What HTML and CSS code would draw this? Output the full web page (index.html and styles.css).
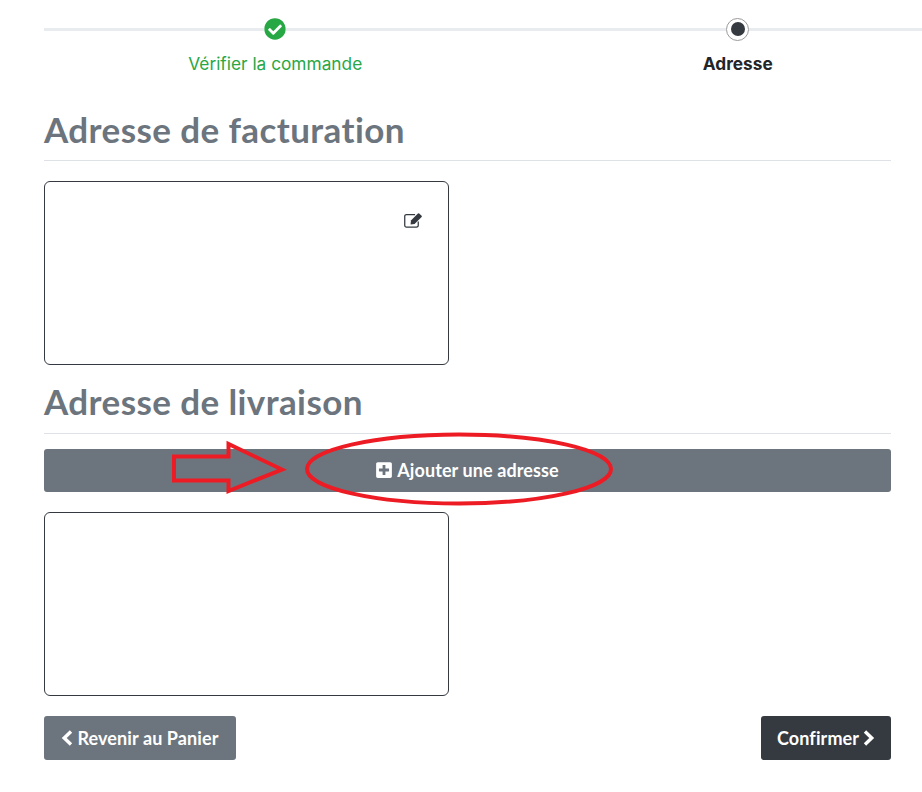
FILE: index.html
```html
<!DOCTYPE html>
<html lang="fr">
<head>
<meta charset="utf-8">
<title>Adresse</title>
<link rel="stylesheet" href="styles.css">
</head>
<body>
<main class="page">
  <ol class="stepper">
    <li class="step step-done">
      <div class="track">
        <span class="line"></span>
        <svg class="step-icon" viewBox="0 0 512 512"><path fill="#28a745" d="M504 256c0 136.967-111.033 248-248 248S8 392.967 8 256 119.033 8 256 8s248 111.033 248 248zM227.314 387.314l184-184c6.248-6.248 6.248-16.379 0-22.627l-22.627-22.627c-6.248-6.249-16.379-6.249-22.628 0L216 308.118l-70.059-70.059c-6.248-6.248-16.379-6.248-22.628 0l-22.627 22.627c-6.248 6.248-6.248 16.379 0 22.627l104 104c6.249 6.25 16.379 6.25 22.628.001z"/></svg>
        <span class="line"></span>
      </div>
      <span class="step-label">Vérifier la commande</span>
    </li>
    <li class="step step-current">
      <div class="track">
        <span class="line"></span>
        <span class="radio"><span class="radio-dot"></span></span>
        <span class="line"></span>
      </div>
      <span class="step-label">Adresse</span>
    </li>
  </ol>

  <section class="section section-billing">
    <h2 class="title">Adresse de facturation</h2>
    <div class="card">
      <svg class="edit-icon" viewBox="0 0 18 15">
        <path fill="none" stroke="#343a40" stroke-width="1.200" d="M13.500 9V12.500a1.600 1.600 0 0 1-1.600 1.700H2.400a1.600 1.600 0 0 1-1.700-1.700V4a1.600 1.600 0 0 1 1.700-1.600H10.500"/>
        <path fill="#343a40" d="M6.600 8L13.200 1.300a.9.9 0 0 1 1.200 0l2.300 2.200a.9.9 0 0 1 0 1.200L10 11.300 6.200 11.700z"/>
      </svg>
    </div>
  </section>

  <section class="section section-shipping">
    <h2 class="title">Adresse de livraison</h2>
    <div class="add-wrap">
      <button class="btn btn-add" type="button">
        <svg class="ico-plus" viewBox="0 0 448 512"><path fill="#fff" d="M400 32H48C21.5 32 0 53.5 0 80v352c0 26.5 21.5 48 48 48h352c26.5 0 48-21.5 48-48V80c0-26.5-21.500-48-48-48zm-32 252c0 6.600-5.400 12-12 12h-92v92c0 6.600-5.400 12-12 12h-56c-6.600 0-12-5.400-12-12v-92H92c-6.600 0-12-5.400-12-12v-56c0-6.600 5.400-12 12-12h92v-92c0-6.600 5.400-12 12-12h56c6.600 0 12 5.400 12 12v92h92c6.600 0 12 5.400 12 12v56z"/></svg>
        Ajouter une adresse
      </button>
      <svg class="annotation" viewBox="0 0 847 80" fill="none" stroke="#ed1c24" stroke-width="4">
        <path stroke-linejoin="miter" d="M130 23.500H184.500V11L238 36.500 184.500 58V47.500H130Z"/>
        <ellipse cx="415" cy="36" rx="152" ry="34.500"/>
      </svg>
    </div>
    <div class="card"></div>
  </section>

  <div class="actions">
    <a class="btn btn-back" href="#">
      <svg class="ico-chev" viewBox="0 0 12 16"><path fill="none" stroke="#fff" stroke-width="3.400" d="M10 1.500L3.200 8 10 14.500"/></svg>
      Revenir au Panier
    </a>
    <a class="btn btn-next" href="#">
      Confirmer
      <svg class="ico-chev" viewBox="0 0 12 16"><path fill="none" stroke="#fff" stroke-width="3.400" d="M2 1.500L8.800 8 2 14.500"/></svg>
    </a>
  </div>
</main>
</body>
</html>
```
FILE: styles.css
```css
* { box-sizing: border-box; }
html, body { margin: 0; padding: 0; overflow: hidden; background: #fff; }
body { font-family: "Lato", "Noto Sans", sans-serif; color: #212529; height: 792px; font-variant-ligatures: none; }

.page { width: 847px; margin-left: 44px; padding-top: 18px; }

.stepper { list-style: none; margin: 0; padding: 0; display: flex; width: 925px; }
.step { flex: 0 0 462.5px; display: flex; flex-direction: column; align-items: center; }
.track { width: 100%; height: 22px; display: flex; align-items: center; }
.line { flex: 1; height: 3px; background: #e9ecef; }
.step-icon { width: 22px; height: 22px; display: block; }
.radio { width: 23px; height: 23px; border-radius: 50%; border: 1px solid #9a9a9a; background: #fff; display: flex; align-items: center; justify-content: center; }
.radio-dot { width: 14px; height: 14px; border-radius: 50%; background: #343a40; }
.step-label { font-family: "Inter", sans-serif; font-size: 17.3px; line-height: 24px; margin-top: 12px; }
.step-done .step-label { color: #28a745; }
.step-current .step-label { font-weight: 700; color: #212529; }

.section-billing { margin-top: 34px; }
.section-shipping { margin-top: 17px; }
.title { margin: 0 0 20px; padding-bottom: 12px; font-size: 35px; letter-spacing: .4px; line-height: 38px; font-weight: 700; color: #6c757d; border-bottom: 1px solid #dee2e6; }
.section-shipping .title { margin-bottom: 15px; padding-bottom: 13px; }
.card { position: relative; width: 405px; height: 184px; border: 1px solid #343a40; border-radius: 6px; background: #fff; }
.edit-icon { position: absolute; top: 30px; right: 25px; width: 19px; height: 16px; }

.btn { display: flex; align-items: center; justify-content: center; border: 0; border-radius: 3px; color: #fff; font-family: "Lato", "Noto Sans", sans-serif; font-size: 18px; letter-spacing: .1px; font-weight: 700; text-decoration: none; font-variant-ligatures: none; }
.add-wrap { position: relative; height: 43px; margin-bottom: 20px; }
.btn-add { width: 100%; height: 43px; padding: 0 0 2px; gap: 5px; background: #6c757d; }
.ico-plus { width: 16px; height: 18px; }
.annotation { position: absolute; left: 0; top: -16px; width: 847px; height: 80px; overflow: visible; pointer-events: none; }

.actions { display: flex; justify-content: space-between; margin-top: 20px; }
.btn-back, .btn-next { height: 44px; padding: 0 16px; gap: 4px; }
.btn-back { width: 192px; background: #6c757d; }
.btn-next { width: 130px; background: #343a40; }
.ico-chev { width: 12px; height: 16px; }
```
